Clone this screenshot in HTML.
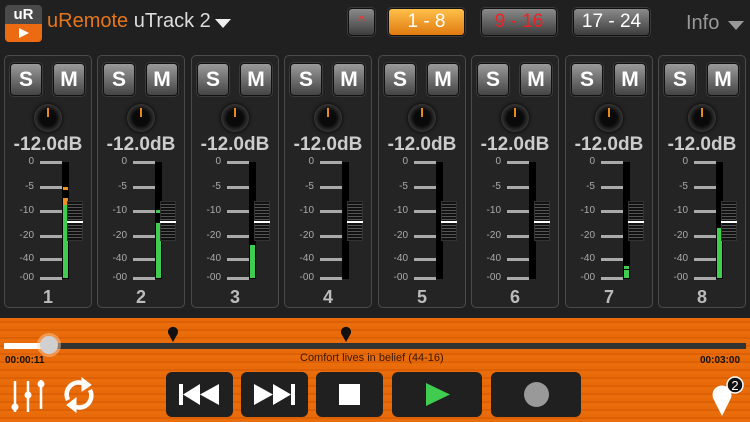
<!DOCTYPE html>
<html><head><meta charset="utf-8"><style>
*{margin:0;padding:0;box-sizing:border-box}
body{width:750px;height:422px;overflow:hidden;background:#202020;font-family:"Liberation Sans",sans-serif;position:relative}
.a{position:absolute}
.logo{left:5px;top:5px;width:37px;height:37px;border-radius:4px;overflow:hidden}
.logo .t{background:#4a4a4a;height:19px;color:#fff;font:bold 15px "Liberation Sans";text-align:center;line-height:19px}
.logo .b{background:#ec6a12;height:18px;position:relative}
.tb{top:8px;height:28px;border-radius:4px;border:1px solid #111;box-shadow:0 0 0 1px #3a3a3a;background:linear-gradient(#8a8a8a,#3c3c3c);text-align:center;font-size:19px;line-height:26px;color:#fff}
.st{width:88px;top:55px;height:253px;border:1px solid #4a4a4a;border-radius:5px;background:#242424}
.btn{top:7px;width:32px;height:33px;border-radius:4px;background:linear-gradient(#9a9a9a,#444);border:1px solid #111;box-shadow:0 0 0 1px #3a3a3a;color:#fff;font:bold 21px "Liberation Sans";text-align:center;line-height:31px}
.kn{left:29px;top:48px;width:28px;height:28px;border-radius:50%;background:radial-gradient(#0a0a0a 40%,#2a2a2a 62%,#4a4036 80%,#242424);box-shadow:0 0 4px #000}
.kn:after{content:"";position:absolute;left:13px;top:4px;width:2px;height:9px;background:#e58a1a}
.db{left:0;width:86px;top:78px;text-align:center;font:bold 19px "Liberation Sans";color:#ccc}
.lb{left:0;width:29px;text-align:right;font-size:10px;color:#aaa;line-height:10px}
.ln{left:35px;width:22px;height:3px;background:#aaa}
.mt{left:57px;top:106px;width:7px;height:117px;background:#000}
.fd{left:62px;top:145px;width:16px;height:40px;background:repeating-linear-gradient(#111 0 2px,#555 2px 3px);border:1px solid #333}
.fd:after{content:"";position:absolute;left:-1px;right:-1px;top:19px;height:2px;background:#fff}
.num{left:0;width:86px;top:231px;text-align:center;font:bold 18px "Liberation Sans";color:#bbb}
.g{left:58px;width:5px;background:#3fcc4f}
.o{left:58px;width:5px;background:#f09020}
.pb{width:67px;height:45px;top:372px;background:#202020;border-radius:6px}
</style></head><body>
<div class="a logo"><div class="t">uR</div><div class="b"><div class="a" style="left:14px;top:4px;border-left:10px solid #fff;border-top:5px solid transparent;border-bottom:5px solid transparent"></div></div></div>
<div class="a" style="left:47px;top:10px;font-size:20px;color:#e5761c">uRemote <span style="color:#ddd">uTrack 2</span></div>
<div class="a" style="left:215px;top:19px;border-top:9px solid #eee;border-left:8px solid transparent;border-right:8px solid transparent"></div>
<div class="a tb" style="left:348px;width:27px;color:#e33;font-size:15px">^</div>
<div class="a tb" style="left:388px;width:77px;background:linear-gradient(#ffc04a,#e07a10)">1 - 8</div>
<div class="a tb" style="left:481px;width:76px;color:#e22">9 - 16</div>
<div class="a tb" style="left:573px;width:77px">17 - 24</div>
<div class="a" style="left:686px;top:12px;font-size:20px;color:#999">Info</div>
<div class="a" style="left:728px;top:21px;border-top:9px solid #999;border-left:8px solid transparent;border-right:8px solid transparent"></div>

<div class="a st" style="left:4px"><div class="a btn" style="left:5px">S</div><div class="a btn" style="left:48px">M</div><div class="a kn"></div><div class="a db">-12.0dB</div>
<div class="a lb" style="top:101px">0</div><div class="a lb" style="top:126px">-5</div><div class="a lb" style="top:150px">-10</div><div class="a lb" style="top:175px">-20</div><div class="a lb" style="top:198px">-40</div><div class="a lb" style="top:217px">-00</div>
<div class="a ln" style="top:105px"></div><div class="a ln" style="top:130px"></div><div class="a ln" style="top:154px"></div><div class="a ln" style="top:179px"></div><div class="a ln" style="top:202px"></div><div class="a ln" style="top:221px"></div>
<div class="a mt"></div><div class="a o" style="top:131px;height:3px"></div><div class="a o" style="top:142px;height:7px"></div><div class="a g" style="top:149px;height:73px"></div><div class="a fd"></div><div class="a num">1</div></div>

<div class="a st" style="left:97px"><div class="a btn" style="left:5px">S</div><div class="a btn" style="left:48px">M</div><div class="a kn"></div><div class="a db">-12.0dB</div>
<div class="a lb" style="top:101px">0</div><div class="a lb" style="top:126px">-5</div><div class="a lb" style="top:150px">-10</div><div class="a lb" style="top:175px">-20</div><div class="a lb" style="top:198px">-40</div><div class="a lb" style="top:217px">-00</div>
<div class="a ln" style="top:105px"></div><div class="a ln" style="top:130px"></div><div class="a ln" style="top:154px"></div><div class="a ln" style="top:179px"></div><div class="a ln" style="top:202px"></div><div class="a ln" style="top:221px"></div>
<div class="a mt"></div><div class="a g" style="top:154px;height:3px"></div><div class="a g" style="top:167px;height:55px"></div><div class="a fd"></div><div class="a num">2</div></div>

<div class="a st" style="left:191px"><div class="a btn" style="left:5px">S</div><div class="a btn" style="left:48px">M</div><div class="a kn"></div><div class="a db">-12.0dB</div>
<div class="a lb" style="top:101px">0</div><div class="a lb" style="top:126px">-5</div><div class="a lb" style="top:150px">-10</div><div class="a lb" style="top:175px">-20</div><div class="a lb" style="top:198px">-40</div><div class="a lb" style="top:217px">-00</div>
<div class="a ln" style="top:105px"></div><div class="a ln" style="top:130px"></div><div class="a ln" style="top:154px"></div><div class="a ln" style="top:179px"></div><div class="a ln" style="top:202px"></div><div class="a ln" style="top:221px"></div>
<div class="a mt"></div><div class="a g" style="top:189px;height:33px"></div><div class="a fd"></div><div class="a num">3</div></div>

<div class="a st" style="left:284px"><div class="a btn" style="left:5px">S</div><div class="a btn" style="left:48px">M</div><div class="a kn"></div><div class="a db">-12.0dB</div>
<div class="a lb" style="top:101px">0</div><div class="a lb" style="top:126px">-5</div><div class="a lb" style="top:150px">-10</div><div class="a lb" style="top:175px">-20</div><div class="a lb" style="top:198px">-40</div><div class="a lb" style="top:217px">-00</div>
<div class="a ln" style="top:105px"></div><div class="a ln" style="top:130px"></div><div class="a ln" style="top:154px"></div><div class="a ln" style="top:179px"></div><div class="a ln" style="top:202px"></div><div class="a ln" style="top:221px"></div>
<div class="a mt"></div><div class="a fd"></div><div class="a num">4</div></div>

<div class="a st" style="left:378px"><div class="a btn" style="left:5px">S</div><div class="a btn" style="left:48px">M</div><div class="a kn"></div><div class="a db">-12.0dB</div>
<div class="a lb" style="top:101px">0</div><div class="a lb" style="top:126px">-5</div><div class="a lb" style="top:150px">-10</div><div class="a lb" style="top:175px">-20</div><div class="a lb" style="top:198px">-40</div><div class="a lb" style="top:217px">-00</div>
<div class="a ln" style="top:105px"></div><div class="a ln" style="top:130px"></div><div class="a ln" style="top:154px"></div><div class="a ln" style="top:179px"></div><div class="a ln" style="top:202px"></div><div class="a ln" style="top:221px"></div>
<div class="a mt"></div><div class="a fd"></div><div class="a num">5</div></div>

<div class="a st" style="left:471px"><div class="a btn" style="left:5px">S</div><div class="a btn" style="left:48px">M</div><div class="a kn"></div><div class="a db">-12.0dB</div>
<div class="a lb" style="top:101px">0</div><div class="a lb" style="top:126px">-5</div><div class="a lb" style="top:150px">-10</div><div class="a lb" style="top:175px">-20</div><div class="a lb" style="top:198px">-40</div><div class="a lb" style="top:217px">-00</div>
<div class="a ln" style="top:105px"></div><div class="a ln" style="top:130px"></div><div class="a ln" style="top:154px"></div><div class="a ln" style="top:179px"></div><div class="a ln" style="top:202px"></div><div class="a ln" style="top:221px"></div>
<div class="a mt"></div><div class="a fd"></div><div class="a num">6</div></div>

<div class="a st" style="left:565px"><div class="a btn" style="left:5px">S</div><div class="a btn" style="left:48px">M</div><div class="a kn"></div><div class="a db">-12.0dB</div>
<div class="a lb" style="top:101px">0</div><div class="a lb" style="top:126px">-5</div><div class="a lb" style="top:150px">-10</div><div class="a lb" style="top:175px">-20</div><div class="a lb" style="top:198px">-40</div><div class="a lb" style="top:217px">-00</div>
<div class="a ln" style="top:105px"></div><div class="a ln" style="top:130px"></div><div class="a ln" style="top:154px"></div><div class="a ln" style="top:179px"></div><div class="a ln" style="top:202px"></div><div class="a ln" style="top:221px"></div>
<div class="a mt"></div><div class="a g" style="top:210px;height:3px"></div><div class="a g" style="top:214px;height:8px"></div><div class="a fd"></div><div class="a num">7</div></div>

<div class="a st" style="left:658px"><div class="a btn" style="left:5px">S</div><div class="a btn" style="left:48px">M</div><div class="a kn"></div><div class="a db">-12.0dB</div>
<div class="a lb" style="top:101px">0</div><div class="a lb" style="top:126px">-5</div><div class="a lb" style="top:150px">-10</div><div class="a lb" style="top:175px">-20</div><div class="a lb" style="top:198px">-40</div><div class="a lb" style="top:217px">-00</div>
<div class="a ln" style="top:105px"></div><div class="a ln" style="top:130px"></div><div class="a ln" style="top:154px"></div><div class="a ln" style="top:179px"></div><div class="a ln" style="top:202px"></div><div class="a ln" style="top:221px"></div>
<div class="a mt"></div><div class="a g" style="top:172px;height:50px"></div><div class="a fd"></div><div class="a num">8</div></div>

<div class="a" style="left:0;top:318px;width:750px;height:104px;background:repeating-linear-gradient(#e86a08 0 3px,#dd6004 3px 5px,#ea6d0c 5px 8px)"></div>
<div class="a" style="left:4px;top:343px;width:742px;height:6px;background:#333"></div>
<div class="a" style="left:4px;top:343px;width:44px;height:6px;background:#fff"></div>
<div class="a" style="left:37px;top:333px;width:24px;height:24px;border-radius:50%;background:rgba(255,210,170,.45)"></div>
<div class="a" style="left:40px;top:336px;width:18px;height:18px;border-radius:50%;background:#d0d0d0"></div>
<svg class="a" style="left:167px;top:326px" width="12" height="17"><path d="M6 16 L1.5 8 A5 5 0 1 1 10.5 8 Z" fill="#111"/></svg>
<svg class="a" style="left:340px;top:326px" width="12" height="17"><path d="M6 16 L1.5 8 A5 5 0 1 1 10.5 8 Z" fill="#111"/></svg>
<div class="a" style="left:5px;top:355px;font:bold 10px 'Liberation Sans';color:#111">00:00:11</div>
<div class="a" style="left:300px;top:352px;font-size:11px;color:#3a1600">Comfort lives in belief (44-16)</div>
<div class="a" style="left:700px;top:355px;font:bold 10px 'Liberation Sans';color:#111">00:03:00</div>
<svg class="a" style="left:10px;top:376px" width="38" height="38" fill="none" stroke="#fff" stroke-width="2.5"><path d="M5 5V36M18 5V36M31 4V33"/><circle cx="5" cy="31" r="3.5" fill="#fff" stroke="none"/><circle cx="18" cy="19" r="3.5" fill="#fff" stroke="none"/><circle cx="31" cy="8" r="3.5" fill="#fff" stroke="none"/></svg>
<svg class="a" style="left:60px;top:376px" width="38" height="38" fill="none" stroke="#fff" stroke-width="4.5"><path d="M8 24 A12 12 0 0 1 26 9"/><path d="M30 14 A12 12 0 0 1 12 29"/><path d="M22 2 L31 9 L22 15Z" fill="#fff" stroke-width="1"/><path d="M16 22 L7 29 L16 36Z" fill="#fff" stroke-width="1"/></svg>
<div class="a pb" style="left:166px"><svg width="67" height="45"><rect x="13" y="12" width="4" height="21" fill="#fff"/><path d="M17 22.5 L34 12 V33Z M34 22.5 L53 12 V33Z" fill="#fff"/></svg></div>
<div class="a pb" style="left:241px"><svg width="67" height="45"><path d="M13 12 L32 22.5 L13 33Z M32 12 L50 22.5 L32 33Z" fill="#fff"/><rect x="50" y="12" width="4" height="21" fill="#fff"/></svg></div>
<div class="a pb" style="left:316px"><div class="a" style="left:23px;top:12px;width:21px;height:21px;background:#fff"></div></div>
<div class="a pb" style="left:392px;width:90px"><svg width="90" height="45"><path d="M34 11 L58 22.5 L34 34Z" fill="#3fcc4f"/></svg></div>
<div class="a pb" style="left:491px;width:90px"><div class="a" style="left:33px;top:10px;width:25px;height:25px;border-radius:50%;background:#999"></div></div>
<svg class="a" style="left:708px;top:376px" width="40" height="42"><path d="M14 40 L5 22 A9.5 9.5 0 1 1 23 22 Z" fill="#fff"/><circle cx="27" cy="9" r="8" fill="#111" stroke="#fff" stroke-width="1.5"/><text x="27" y="14" text-anchor="middle" font-family="Liberation Sans" font-size="13" fill="#fff">2</text></svg>
</body></html>
